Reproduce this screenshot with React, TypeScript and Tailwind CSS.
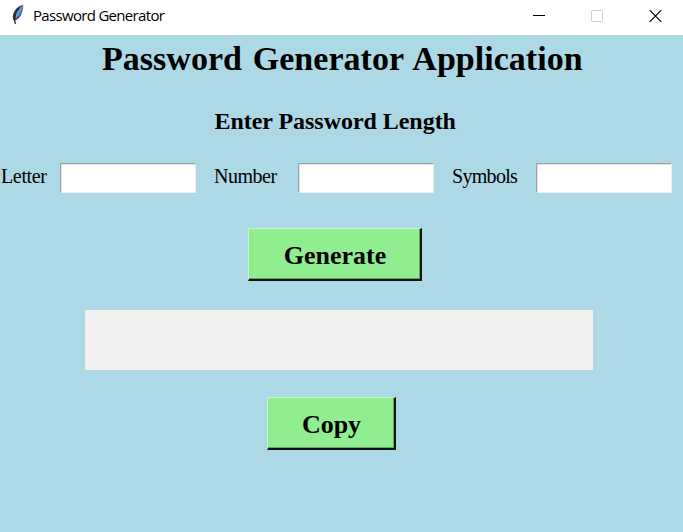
import React from "react";

function Feather() {
  return (
    <svg width="14" height="22" viewBox="0 0 14 22" className="mt-[4px] ml-[11px] shrink-0">
      <path d="M11.8 1 C8 1.5 4 5 2.2 10 C1.4 13 1.6 15 3.2 17 C6 15.5 9 14 10.3 10 C11.6 7 12.2 4 11.8 1Z" fill="#39424f" />
      <path d="M11 2.2 C8 4 4.8 8 4.2 14.8 C7.3 13.3 9.2 10.5 10.2 7.5 C11 5 11.3 4 11 2.2Z" fill="#5a9ade" />
      <path d="M8.2 4 C5 7 3.5 11 3.4 15.5 L4.4 20" fill="none" stroke="#1d222b" strokeWidth="1.2" />
      <path d="M9.5 1.8 L11.8 1 L11.8 4.5" fill="none" stroke="#8b9299" strokeWidth="0.9" />
    </svg>
  );
}

function TitleBar() {
  return (
    <header className="flex h-[35px] bg-white text-black">
      <Feather />
      <span className="ml-[8px] mt-[4px] h-[22px] whitespace-nowrap font-['Open_Sans',sans-serif] text-[15px] leading-[22px] tracking-[-0.68px]">
        Password Generator
      </span>
      <div className="ml-auto mr-[21px] mt-[9px] flex gap-[46px]">
        <svg width="12" height="14" viewBox="0 0 12 14"><path d="M0 6.5H12" stroke="#000" /></svg>
        <svg width="12" height="14" viewBox="0 0 12 14"><rect x=".5" y="1.5" width="11" height="11" rx=".8" fill="none" stroke="#ccc" /></svg>
        <svg width="13" height="14" viewBox="0 0 13 14"><path d="M.7 1.2L12.3 12.8M12.3 1.2L.7 12.8" stroke="#000" strokeWidth="1.2" /></svg>
      </div>
    </header>
  );
}

function Field({ label, labelClass }: { label: string; labelClass: string }) {
  return (
    <label className="flex h-[30px]">
      <span className={`mt-[1px] shrink-0 text-[20px] leading-[25px] ${labelClass}`}>{label}</span>
      <input
        type="text"
        className="h-[30px] w-[136px] border border-t-[#a0a0a0] border-r-[#e2f1f6] border-b-[#e2f1f6] border-l-[#a0a0a0] bg-white px-1 shadow-[inset_1px_1px_0_#e3e3e3] outline-none"
      />
    </label>
  );
}

function TkButton({ children, size }: { children: React.ReactNode; size: string }) {
  return (
    <button
      type="button"
      className={`block h-[53px] border-t border-r-2 border-b-2 border-l border-t-[#c2f8c2] border-r-[#111] border-b-[#111] border-l-[#c2f8c2] bg-[#90ee90] pt-[4px] pl-[1px] text-[26px] leading-[46px] font-bold shadow-[inset_-1px_-1px_0_#62a562] ${size}`}
    >
      {children}
    </button>
  );
}

export default function App() {
  return (
    <div className="h-[532px] w-[683px] overflow-hidden bg-[#add8e6] font-['Liberation_Serif',serif] text-black">
      <TitleBar />
      <main>
        <h1 className="ml-[102px] pt-[5px] text-[34px] leading-[38px] font-bold whitespace-nowrap tracking-[0.03px] [word-spacing:2.2px]">
          Password Generator Application
        </h1>
        <h2 className="mt-[29px] ml-[214.5px] text-[24px] leading-[28px] font-bold tracking-[-0.04px] whitespace-nowrap">
          Enter Password Length
        </h2>
        <form className="mt-[28px] flex">
          <Field label="Letter" labelClass="w-[60px] pl-[1px] tracking-[-0.35px]" />
          <Field label="Number" labelClass="w-[102px] pl-[18px] tracking-[-0.5px]" />
          <Field label="Symbols" labelClass="w-[102px] pl-[18px] tracking-[-0.7px]" />
        </form>
        <div className="mt-[35px] ml-[248px]">
          <TkButton size="w-[174px]">Generate</TkButton>
        </div>
        <output className="mt-[29px] ml-[85px] block h-[60px] w-[508px] bg-[#f0f0f0]" />
        <div className="mt-[27px] ml-[267px]">
          <TkButton size="w-[129px]">Copy</TkButton>
        </div>
      </main>
    </div>
  );
}
